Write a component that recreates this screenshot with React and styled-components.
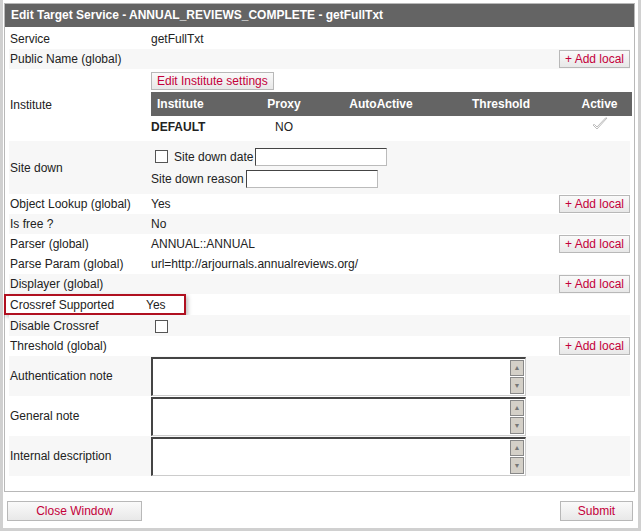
import React from "react";
import styled, { createGlobalStyle } from "styled-components";

const Global = createGlobalStyle`
  body { margin: 0; background: #fff; font-family: "Liberation Sans", Arial, sans-serif; font-size: 12px; color: #222; }
`;

const Page = styled.div`
  width: 641px;
  height: 531px;
  box-sizing: border-box;
  border-left: 3px solid #d0d0d0;
  border-right: 3px solid #d0d0d0;
  border-bottom: 3px solid #d0d0d0;
  padding: 3px 3px 0 1px;
  display: flex;
  flex-direction: column;
`;

const Panel = styled.div`
  border: 1px solid #b8b8b8;
  height: 489px;
  box-sizing: border-box;
  padding: 0 4px 0 4px;
  display: flex;
  flex-direction: column;
`;

const Header = styled.div`
  background: #646464;
  color: #fff;
  font-weight: bold;
  height: 23px;
  line-height: 23px;
  padding-left: 6px;
  margin: 0 -4px 2px;
`;

const Row = styled.div`
  display: flex;
  align-items: center;
  min-height: ${(p) => p.$h || 20}px;
  background: ${(p) => (p.$alt ? "#f7f7f7" : "#fff")};
`;

const Label = styled.div`
  width: 141px;
  padding-left: 1px;
  flex-shrink: 0;
`;

const Value = styled.div`
  flex: 1;
  display: flex;
  flex-direction: column;
  gap: ${(p) => p.$gap || 0}px;
`;

const Btn = styled.button`
  font-family: inherit;
  font-size: 12px;
  color: #c4003a;
  background: linear-gradient(#fafafa, #e8e8e8);
  border: 1px solid #b8b8b8;
  height: ${(p) => p.$h || 18}px;
  padding: 0 ${(p) => p.$px || 5}px;
  width: ${(p) => (p.$w ? p.$w + "px" : "auto")};
  cursor: pointer;
  align-self: ${(p) => p.$self || "auto"};
`;

const Table = styled.div`
  display: grid;
  grid-template-columns: 90px 86px 108px 132px 65px;
`;

const Th = styled.div`
  background: #646464;
  color: #fff;
  font-weight: bold;
  height: 24px;
  line-height: 24px;
  text-align: ${(p) => p.$align || "center"};
  padding-left: ${(p) => p.$pl || 0}px;
`;

const Td = styled.div`
  height: 22px;
  line-height: 22px;
  text-align: ${(p) => p.$align || "center"};
  font-weight: ${(p) => (p.$bold ? "bold" : "normal")};
`;

const Check = styled.span`
  display: inline-block;
  width: 11px;
  height: 11px;
  border: 1px solid #555;
  background: #fff;
  margin: 0 6px 0 4px;
  vertical-align: middle;
`;

const Input = styled.input`
  width: ${(p) => p.$w}px;
  height: 16px;
  border: 1px solid #bbb;
  border-top-color: #444;
  border-left-color: #444;
  margin-left: 2px;
  vertical-align: middle;
  padding: 0;
`;

const Line = styled.div`
  display: flex;
  align-items: center;
  height: 22px;
`;

const Highlight = styled.div`
  display: flex;
  align-items: center;
  margin-left: -5px;
  border: 2px solid #b01020;
  height: 17px;
  width: 178px;
  box-shadow: 2px 2px 4px rgba(0,0,0,0.25);
  label { width: 136px; padding-left: 4px; }
`;

const Area = styled.div`
  width: 372px;
  height: 36px;
  border: 1px solid #ccc;
  border-top: 2px solid #444;
  border-left: 2px solid #444;
  background: #fff;
  display: flex;
  justify-content: flex-end;
`;

const Spin = styled.div`
  width: 14px;
  display: flex;
  flex-direction: column;
  gap: 1px;
  padding: 1px;
  div {
    flex: 1;
    background: #d4d0c8;
    border: 1px solid #888;
    display: flex;
    align-items: center;
    justify-content: center;
    color: #777;
    font-size: 7px;
  }
`;

const Footer = styled.div`
  display: flex;
  justify-content: space-between;
  padding: 9px 2px 0 3px;
`;

const Spacer = styled.div`flex: 1;`;

const Tick = () => (
  <svg width="16" height="14" viewBox="0 0 16 14">
    <path d="M1 8 L5 12 L15 1 L13.5 1 L5 10 L2.5 7.5 Z" fill="none" stroke="#bbb" strokeWidth="1" />
  </svg>
);

const Note = ({ label, alt }) => (
  <Row $alt={alt} $h={40}>
    <Label>{label}</Label>
    <Value>
      <Area>
        <Spin><div>▲</div><div>▼</div></Spin>
      </Area>
    </Value>
  </Row>
);

const Simple = ({ label, value, alt, add }) => (
  <Row $alt={alt}>
    <Label>{label}</Label>
    <Value>{value}</Value>
    {add && <Btn>+ Add local</Btn>}
  </Row>
);

export default function App() {
  return (
    <>
      <Global />
      <Page>
        <Panel>
          <Header>Edit Target Service - ANNUAL_REVIEWS_COMPLETE - getFullTxt</Header>
          <Simple label="Service" value="getFullTxt" />
          <Simple label="Public Name (global)" alt add />
          <Row $h={72}>
            <Label>Institute</Label>
            <Value $gap={2}>
              <Btn $self="flex-start">Edit Institute settings</Btn>
              <Table>
                <Th $align="left" $pl={6}>Institute</Th>
                <Th>Proxy</Th>
                <Th>AutoActive</Th>
                <Th>Threshold</Th>
                <Th>Active</Th>
                <Td $align="left" $bold>DEFAULT</Td>
                <Td>NO</Td>
                <Td />
                <Td />
                <Td><Tick /></Td>
              </Table>
            </Value>
          </Row>
          <Row $alt $h={53}>
            <Label>Site down</Label>
            <Value>
              <Line><Check />Site down date<Input $w={130} /></Line>
              <Line>Site down reason<Input $w={130} /></Line>
            </Value>
          </Row>
          <Simple label="Object Lookup (global)" value="Yes" add />
          <Simple label="Is free ?" value="No" alt />
          <Simple label="Parser (global)" value="ANNUAL::ANNUAL" add />
          <Simple label="Parse Param (global)" value="url=http://arjournals.annualreviews.org/" />
          <Simple label="Displayer (global)" alt add />
          <Row>
            <Highlight><label>Crossref Supported</label>Yes</Highlight>
          </Row>
          <Row $alt $h={21}>
            <Label>Disable Crossref</Label>
            <Value><span><Check style={{ marginLeft: 4 }} /></span></Value>
          </Row>
          <Simple label="Threshold (global)" add />
          <Note label="Authentication note" alt />
          <Note label="General note" />
          <Note label="Internal description" alt />
          <Spacer />
        </Panel>
        <Footer>
          <Btn $h={20} $w={135}>Close Window</Btn>
          <Btn $h={20} $w={73}>Submit</Btn>
        </Footer>
      </Page>
    </>
  );
}
